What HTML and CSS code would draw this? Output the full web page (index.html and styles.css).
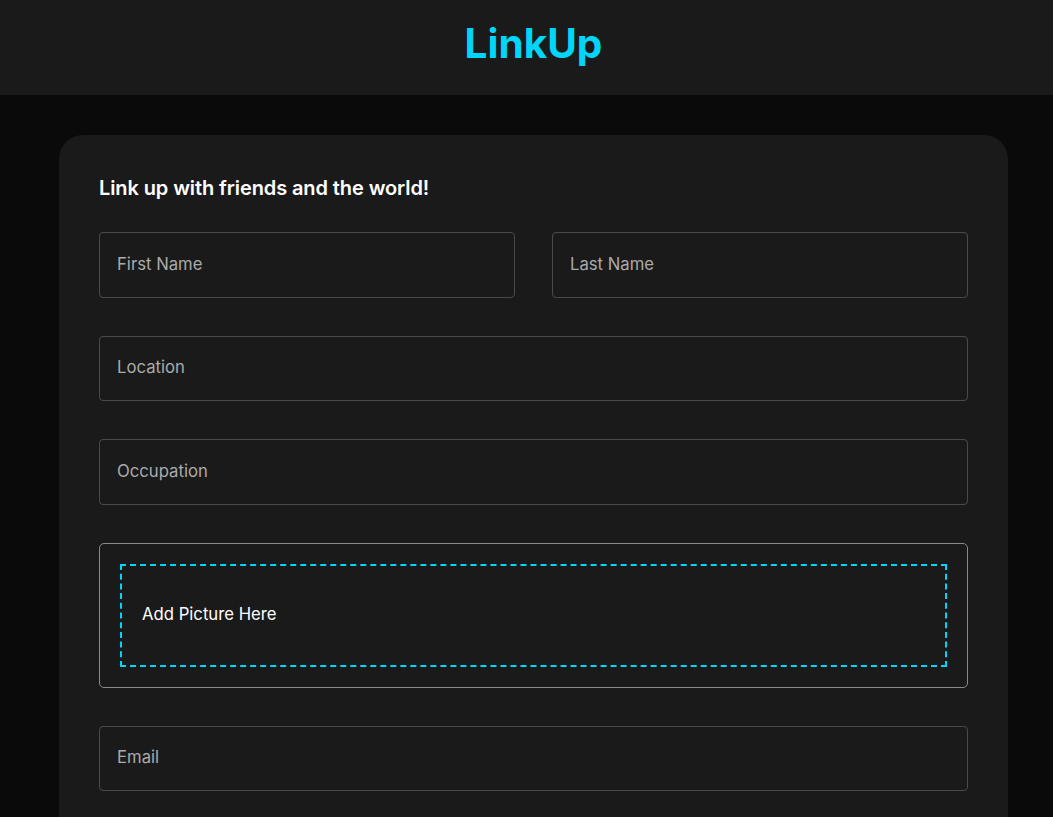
FILE: index.html
```html
<!DOCTYPE html>
<html>
<head>
<meta charset="utf-8">
<link rel="stylesheet" href="styles.css">
</head>
<body>
<header class="topbar">
  <h1 class="brand">LinkUp</h1>
</header>
<main class="page">
  <section class="card">
    <h2 class="welcome">Link up with friends and the world!</h2>
    <form class="form">
      <div class="field half"><span class="label">First Name</span></div>
      <div class="field half"><span class="label">Last Name</span></div>
      <div class="field full"><span class="label">Location</span></div>
      <div class="field full"><span class="label">Occupation</span></div>
      <div class="picture full">
        <div class="dropzone"><span class="drop-text">Add Picture Here</span></div>
      </div>
      <div class="field full"><span class="label">Email</span></div>
    </form>
  </section>
</main>
</body>
</html>
```

FILE: styles.css
```css
* { box-sizing: border-box; }
html, body { margin: 0; padding: 0; }
body {
  background: #0a0a0a;
  font-family: "Inter", "Roboto", "Liberation Sans", sans-serif;
  color: #e0e0e0;
  height: 817px;
  overflow: hidden;
}
.topbar {
  background: #1a1a1a;
  height: 95px;
  display: flex;
  align-items: center;
  justify-content: center;
  padding-bottom: 6px;
  padding-left: 14px;
}
.brand {
  margin: 0;
  font-size: 40.5px;
  font-weight: 700;
  color: #00d5fa;
  line-height: 1;
}
.page {
  padding: 40px 45px 0 59px;
}
.card {
  background: #1a1a1a;
  border-radius: 24px;
  padding: 40px 40px 120px 40px;
  width: 949px;
}
.welcome {
  margin: 0 0 31px 0;
  font-size: 20px;
  font-weight: 600;
  color: #ffffff;
  line-height: 26px;
  letter-spacing: -0.1px;
}
.form {
  display: grid;
  grid-template-columns: 1fr 1fr;
  column-gap: 37px;
  row-gap: 38px;
}
.full { grid-column: 1 / -1; }
.field {
  height: 65.5px;
  border: 1px solid #4a4a4a;
  border-radius: 4px;
  display: flex;
  align-items: center;
  padding-left: 17px;
  padding-bottom: 2px;
}
.label {
  font-size: 16.7px;
  color: #ababab;
}
.picture {
  border: 1px solid #8a8a8a;
  border-radius: 5px;
  padding: 20px;
  height: 145px;
}
.dropzone {
  border: 2px dashed #00d5fa;
  height: 103px;
  display: flex;
  align-items: center;
  padding-left: 20px;
  padding-bottom: 2px;
}
.drop-text {
  font-size: 16.7px;
  color: #ffffff;
}
```
